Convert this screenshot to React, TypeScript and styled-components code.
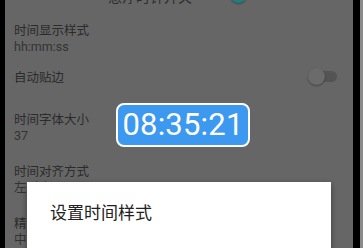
import React from "react";
import styled, { createGlobalStyle } from "styled-components";

const Global = createGlobalStyle`
  html, body { margin: 0; padding: 0; background: #000; }
  body { width: 363px; height: 248px; overflow: hidden; font-family: Roboto, "Noto Sans CJK SC", sans-serif; }
`;

const Frame = styled.div`
  display: flex;
  width: 363px;
  height: 248px;
  background: #000;
`;

const Bezel = styled.div<{ $w: number; $c: string }>`
  width: ${(p) => p.$w}px;
  flex: none;
  background: ${(p) => p.$c};
`;

const Screen = styled.div`
  position: relative;
  width: 348px;
  flex: none;
  height: 248px;
  overflow: hidden;
  background: #666666;
`;

const List = styled.div`
  display: flex;
  flex-direction: column;
  margin-top: -26px;
`;

const HeaderRow = styled.div`
  display: flex;
  align-items: flex-end;
  gap: 26px;
  height: 32px;
  padding: 0 0 1px 103px;
  box-sizing: border-box;
  color: #2c2c2c;
  font-size: 14px;
  line-height: 17px;
  font-family: "Noto Sans CJK SC", sans-serif;
`;

const HeaderSwitchWrap = styled.div`
  padding-bottom: 5px;
`;

const Row = styled.div<{ $single?: boolean }>`
  display: flex;
  align-items: center;
  justify-content: space-between;
  padding: ${(p) => (p.$single ? "0 16px 0 9px" : "15px 9px 3px")};
  height: ${(p) => (p.$single ? "37px" : "auto")};
  box-sizing: border-box;
`;

const Texts = styled.div`
  display: flex;
  flex-direction: column;
`;

const Title = styled.div`
  font-family: "Noto Sans CJK SC", sans-serif;
  font-size: 12.5px;
  line-height: 17px;
  color: #2b2b2b;
`;

const Sub = styled.div`
  font-family: Roboto, "Noto Sans CJK SC", sans-serif;
  font-size: 12.5px;
  line-height: 17px;
  color: #333;
`;

const Switch = styled.div<{ $on?: boolean }>`
  position: relative;
  width: 27px;
  height: 11px;
  border-radius: 6px;
  background: ${(p) => (p.$on ? "#2a6f70" : "#545454")};
`;

const Knob = styled.div<{ $on?: boolean }>`
  position: absolute;
  top: -3px;
  left: ${(p) => (p.$on ? "12px" : "-2px")};
  width: 17px;
  height: 17px;
  border-radius: 50%;
  background: ${(p) => (p.$on ? "#1c7f86" : "#6b6b6b")};
  box-shadow: 0 1px 2px rgba(0, 0, 0, 0.35);
`;

const Clock = styled.div`
  position: absolute;
  left: 111px;
  top: 103px;
  width: 134px;
  height: 44px;
  box-sizing: border-box;
  border: 2px solid #fff;
  border-radius: 8px;
  background: #3d98f0;
  color: #fff;
  font-family: Roboto, sans-serif;
  font-size: 31px;
  line-height: 40px;
  text-align: center;
  letter-spacing: 0.2px;
`;

const Dialog = styled.div`
  position: absolute;
  left: 22px;
  top: 182px;
  width: 304px;
  height: 90px;
  background: #fff;
  box-shadow: 0 2px 6px rgba(0, 0, 0, 0.4);
  padding: 18px 23px;
  box-sizing: border-box;
`;

const DialogTitle = styled.div`
  font-family: "Noto Sans CJK SC", sans-serif;
  font-size: 17px;
  line-height: 24px;
  color: #212121;
`;

export default function App() {
  return (
    <>
      <Global />
      <Frame>
        <Bezel $w={5} $c="#000" />
        <Screen>
          <List>
            <HeaderRow>
              <span>悬浮时钟开关</span>
              <HeaderSwitchWrap>
                <Switch $on>
                  <Knob $on />
                </Switch>
              </HeaderSwitchWrap>
            </HeaderRow>
            <Row>
              <Texts>
                <Title>时间显示样式</Title>
                <Sub>hh:mm:ss</Sub>
              </Texts>
            </Row>
            <Row $single>
              <Title>自动贴边</Title>
              <Switch>
                <Knob />
              </Switch>
            </Row>
            <Row>
              <Texts>
                <Title>时间字体大小</Title>
                <Sub>37</Sub>
              </Texts>
            </Row>
            <Row>
              <Texts>
                <Title>时间对齐方式</Title>
                <Sub>左对齐</Sub>
              </Texts>
            </Row>
            <Row>
              <Texts>
                <Title>精确度</Title>
                <Sub>中</Sub>
              </Texts>
            </Row>
          </List>
          <Clock>08:35:21</Clock>
          <Dialog>
            <DialogTitle>设置时间样式</DialogTitle>
          </Dialog>
        </Screen>
        <Bezel $w={7} $c="#000" />
        <Bezel $w={3} $c="#8a8a8a" />
      </Frame>
    </>
  );
}
